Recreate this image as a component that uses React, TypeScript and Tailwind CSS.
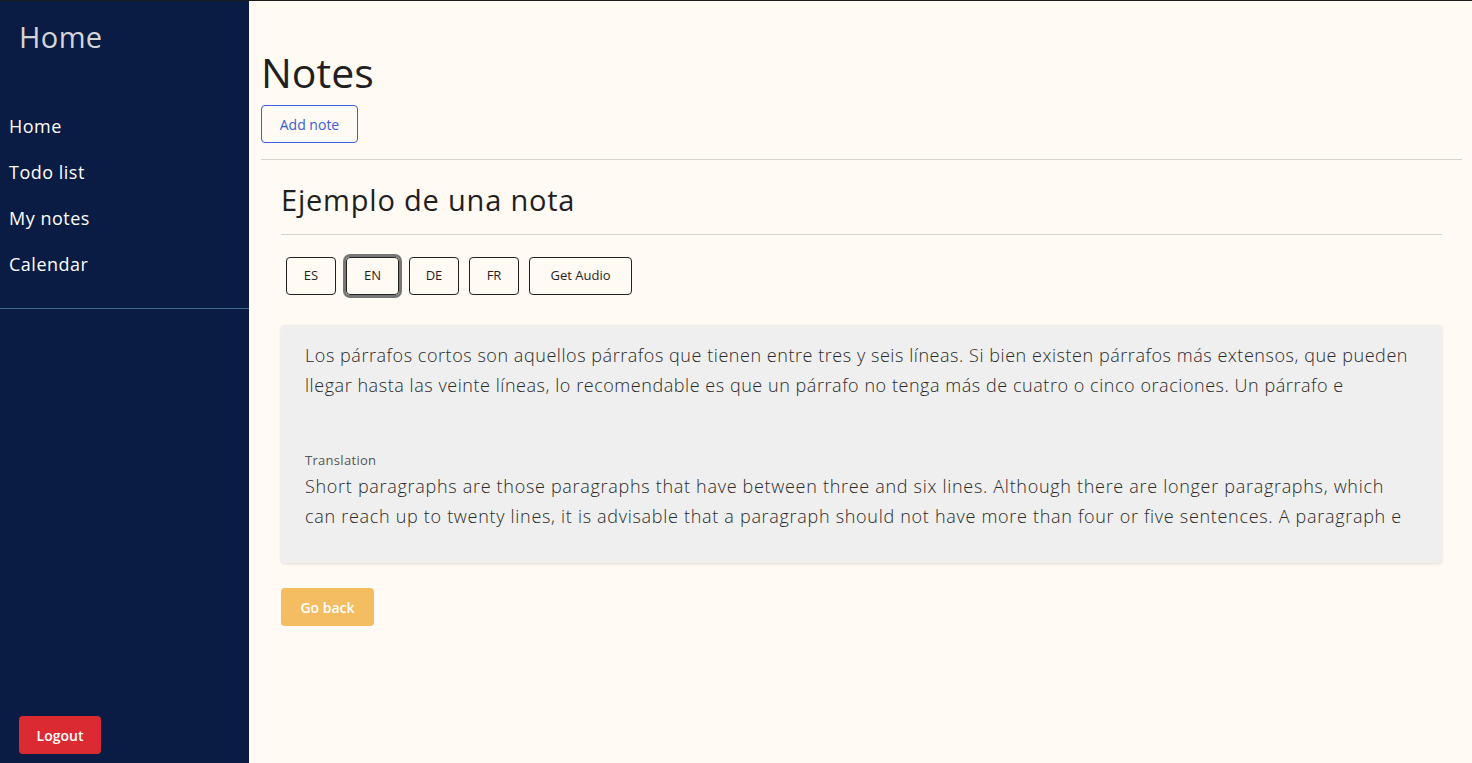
import { useState } from 'react';

const font = { fontFamily: '"Open Sans", "Noto Sans", sans-serif' };

const navItems = ['Home', 'Todo list', 'My notes', 'Calendar'];
const langs = ['ES', 'EN', 'DE', 'FR'];

export default function App() {
    const [lang, setLang] = useState('EN');

    return (
        <div className="flex h-[763px] w-full overflow-hidden border-t border-[#1c1c1c] bg-[#fffaf3]" style={font}>
            <aside className="flex w-[249px] shrink-0 flex-col bg-[#0a1c44]">
                <div className="px-[19px] pt-[17px] text-[29px] leading-[38px] tracking-[0.4px] text-[#d4d4d8]">Home</div>
                <nav className="mt-[57px] flex flex-col gap-[20px] px-[9px]">
                    {navItems.map((item) => (
                        <a key={item} href="#" className="text-[18px] leading-[26px] tracking-[0.5px] text-white">
                            {item}
                        </a>
                    ))}
                </nav>
                <div className="mt-[31px] border-t border-[#3f6f84]"></div>
                <div className="mt-auto px-[19px] pb-[9px]">
                    <button className="h-[38px] w-[82px] rounded bg-[#dc2a33] text-[14px] font-semibold text-white">
                        Logout
                    </button>
                </div>
            </aside>

            <main className="flex-1 pl-[12px] pr-[10px]">
                <h1 className="mt-[47px] text-[41px] leading-[48px] text-[#1f1f1f]">Notes</h1>
                <button className="mt-[9px] h-[38px] w-[97px] rounded border border-[#3b5bdb] text-[14px] text-[#3b5bdb]">
                    Add note
                </button>
                <div className="mt-[16px] border-t border-[#d6d3ce]"></div>

                <section className="px-[20px]">
                    <h2 className="mt-[22px] text-[29px] leading-[36px] tracking-[0.8px] text-[#1f1f1f]">Ejemplo de una nota</h2>
                    <div className="mt-[16px] border-t border-[#d6d3ce]"></div>

                    <div className="mt-[22px] flex gap-[10px] pl-[5px]">
                        {langs.map((l) => (
                            <button
                                key={l}
                                onClick={() => setLang(l)}
                                className={
                                    l === lang
                                        ? 'h-[38px] w-[53px] rounded border border-[#222] text-[13px] font-medium text-[#1f1f1f] outline-[3px] outline-solid outline-[#777]'
                                        : 'h-[38px] w-[50px] rounded border border-[#222] text-[13px] font-medium text-[#1f1f1f]'
                                }
                            >
                                {l}
                            </button>
                        ))}
                        <button className="h-[38px] w-[103px] rounded border border-[#222] text-[13px] font-medium text-[#1f1f1f]">
                            Get Audio
                        </button>
                    </div>

                    <div className="mt-[30px] rounded bg-[#efefef] px-[24px] pb-[32px] pt-[15px] shadow-[0_1px_3px_rgba(0,0,0,0.12)]">
                        <p className="whitespace-nowrap text-[18px] leading-[30px] tracking-[0.55px] font-light text-[#2a2a2a]">
                            Los párrafos cortos son aquellos párrafos que tienen entre tres y seis líneas. Si bien existen párrafos más extensos, que pueden
                            <br />
                            llegar hasta las veinte líneas, lo recomendable es que un párrafo no tenga más de cuatro o cinco oraciones. Un párrafo e
                        </p>
                        <div className="mt-[50px] text-[13px] leading-[20px] tracking-[0.3px] text-[#555]">Translation</div>
                        <p className="mt-[1px] whitespace-nowrap text-[18px] leading-[30px] tracking-[0.7px] font-light text-[#2a2a2a]">
                            Short paragraphs are those paragraphs that have between three and six lines. Although there are longer paragraphs, which
                            <br />
                            can reach up to twenty lines, it is advisable that a paragraph should not have more than four or five sentences. A paragraph e
                        </p>
                    </div>

                    <button className="mt-[25px] h-[38px] w-[93px] rounded bg-[#f4bd62] text-[14px] font-semibold text-white">
                        Go back
                    </button>
                </section>
            </main>
        </div>
    );
}
